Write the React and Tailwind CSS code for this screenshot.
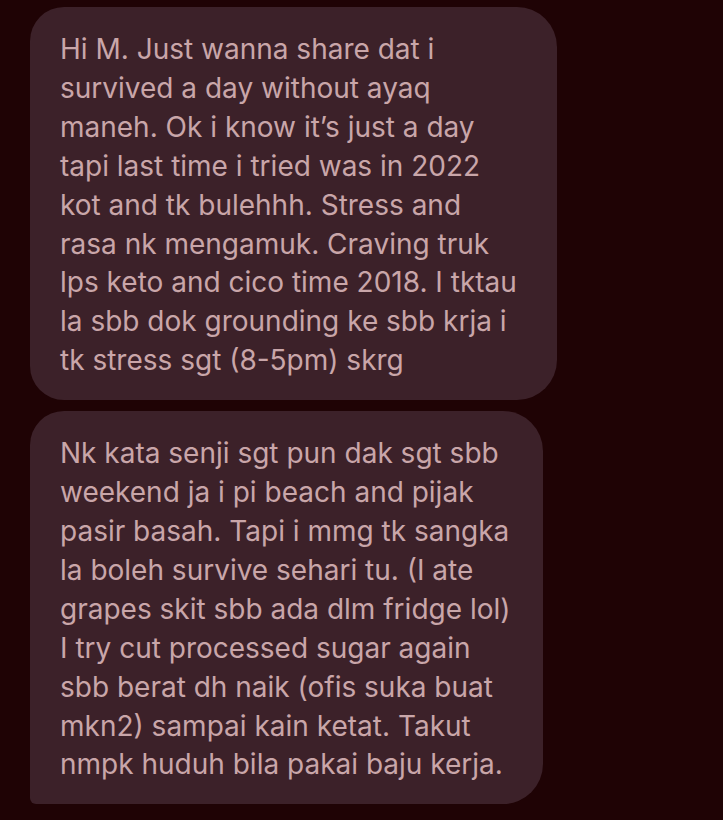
import React from 'react';

const first = [
  'Hi M. Just wanna share dat i',
  'survived a day without ayaq',
  'maneh. Ok i know it\u2019s just a day',
  'tapi last time i tried was in 2022',
  'kot and tk bulehhh. Stress and',
  'rasa nk mengamuk. Craving truk',
  'lps keto and cico time 2018. I tktau',
  'la sbb dok grounding ke sbb krja i',
  'tk stress sgt (8-5pm) skrg',
];

const second = [
  'Nk kata senji sgt pun dak sgt sbb',
  'weekend ja i pi beach and pijak',
  'pasir basah. Tapi i mmg tk sangka',
  'la boleh survive sehari tu. (I ate',
  'grapes skit sbb ada dlm fridge lol)',
  'I try cut processed sugar again',
  'sbb berat dh naik (ofis suka buat',
  'mkn2) sampai kain ketat. Takut',
  'nmpk huduh bila pakai baju kerja.',
];

function Bubble({ lines, className }) {
  return (
    <div className={`bg-[#3c2129] pl-[30px] pr-4 pt-[23px] pb-[20px] ${className}`}>
      {lines.map((l, i) => (
        <p key={i} className="whitespace-nowrap text-[28px] leading-[38.9px] text-[#c9a6a9]">
          {l}
        </p>
      ))}
    </div>
  );
}

export default function App() {
  return (
    <div className="min-h-[820px] w-[723px] bg-[#1f0305] pt-[7px] pl-[30px] font-['Inter','Noto_Sans',sans-serif]">
      <div className="flex flex-col gap-[11px]">
        <Bubble lines={first} className="w-[527px] rounded-[34px] rounded-tr-[40px] rounded-br-[40px]" />
        <Bubble lines={second} className="w-[513px] rounded-[34px] rounded-tr-[40px] rounded-br-[40px] rounded-bl-[6px]" />
      </div>
    </div>
  );
}
